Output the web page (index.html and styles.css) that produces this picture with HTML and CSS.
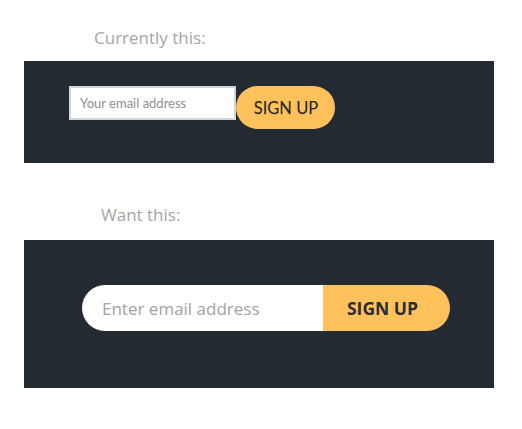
FILE: index.html
```html
<!DOCTYPE html>
<html lang="en">
<head>
    <meta charset="UTF-8">
    <title>Sign up form</title>
    <link rel="stylesheet" href="styles.css">
</head>
<body>
    <div class="demo">
        <p class="caption caption-now">Currently this:</p>
        <div class="panel panel-now">
            <form class="form-now">
                <input type="email" class="email-now" placeholder="Your email address">
                <button type="button" class="btn-now">SIGN UP</button>
            </form>
        </div>

        <p class="caption caption-want">Want this:</p>
        <div class="panel panel-want">
            <form class="form-want">
                <input type="email" class="email-want" placeholder="Enter email address">
                <button type="button" class="btn-want">SIGN UP</button>
            </form>
        </div>
    </div>
</body>
</html>
```

FILE: styles.css
```css
body {
    margin: 0;
    font-family: "Open Sans", sans-serif;
    background: #fff;
}
.demo {
    width: 470px;
    margin-left: 24px;
    padding-top: 26px;
}
.caption {
    margin: 0;
    font-size: 17px;
    line-height: 24px;
    color: #a6a6a6;
}
.caption-now {
    padding-left: 70px;
    margin-bottom: 11px;
}
.caption-want {
    padding-left: 77px;
    margin-top: 40px;
    margin-bottom: 13px;
}
.panel {
    background-color: #232a32;
}

/* current version */
.panel-now {
    padding: 25px 0 34px 45px;
}
.form-now {
    display: flex;
    align-items: flex-start;
}
.email-now {
    box-sizing: border-box;
    width: 167px;
    height: 34px;
    margin: 0;
    padding: 0 9px;
    border: 2px solid #d3d6d8;
    font-family: Lato, sans-serif;
    font-size: 13px;
    color: #333;
    outline: none;
}
.email-now::placeholder {
    color: #8f8f8f;
}
.btn-now {
    width: 99px;
    height: 43px;
    margin: 0;
    padding: 0 0 0 1px;
    border: none;
    border-radius: 22px;
    background-color: #ffc15b;
    font-family: Lato, sans-serif;
    font-weight: 400;
    font-size: 16.5px;
    color: #262626;
    text-shadow: 0 1px 1px rgba(0, 0, 0, 0.12);
}

/* wanted version */
.panel-want {
    padding: 45px 0 57px 58px;
}
.form-want {
    display: flex;
    width: 368px;
    height: 46px;
}
.email-want {
    box-sizing: border-box;
    width: 241px;
    height: 46px;
    margin: 0;
    padding: 0 0 0 20px;
    border: none;
    border-radius: 23px 0 0 23px;
    font-family: "Open Sans", sans-serif;
    font-size: 17px;
    color: #333;
    outline: none;
}
.email-want::placeholder {
    color: #a3a3a3;
}
.btn-want {
    width: 127px;
    height: 46px;
    margin: 0;
    padding: 0 8px 0 0;
    border: none;
    border-radius: 0 23px 23px 0;
    background-color: #ffc15b;
    font-family: "Open Sans", sans-serif;
    font-weight: 700;
    font-size: 17.5px;
    color: #2b2e33;
}
```
